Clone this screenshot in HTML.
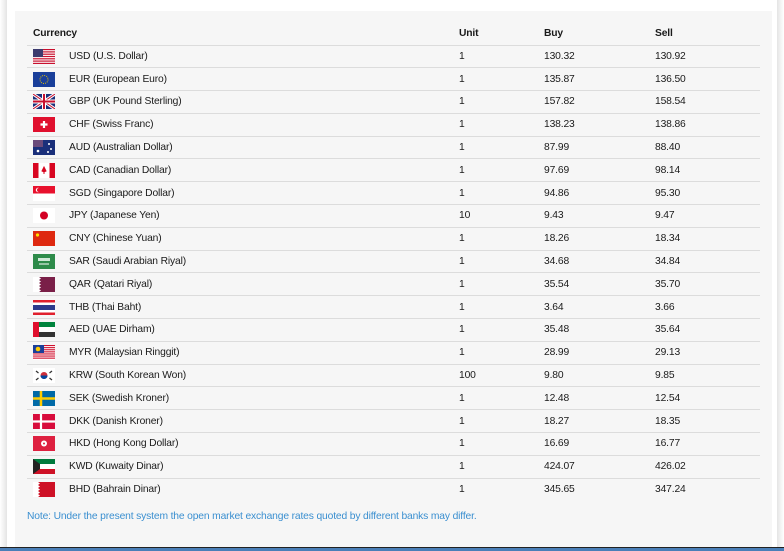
<!DOCTYPE html>
<html><head><style>
*{margin:0;padding:0;box-sizing:border-box}
body{width:784px;height:551px;background:#fff;position:relative;overflow:hidden;font-family:"Liberation Sans",sans-serif;color:#1a1a1a}
.ls{position:absolute;left:0;top:0;width:7px;height:551px;background:linear-gradient(90deg,#fff,#e4e4e4)}
.rs{position:absolute;left:777px;top:0;width:7px;height:551px;background:linear-gradient(90deg,#e4e4e4,#fff)}
.panel{position:absolute;left:15px;top:11px;width:757px;height:536px;background:#f6f6f6}
table{position:absolute;left:27px;top:23px;width:733px;border-collapse:collapse;font-size:10.3px;letter-spacing:-0.15px}
th{text-align:left;font-weight:bold;height:22px;border-bottom:1px solid #dcdcdc;padding:0}
td{height:22.8px;border-bottom:1px solid #dcdcdc;padding:0;vertical-align:middle}
tr:last-child td{border-bottom:none}
td svg{display:block;margin-left:6px}
.c1{width:42px}.c2{width:390px}.c3{width:85px}.c4{width:111px}
.note{position:absolute;left:27px;top:511px;font-size:10.3px;color:#3a8fd0;letter-spacing:-0.15px}
.tb{position:absolute;left:0;top:547px;width:784px;height:4px;background:#4a7fb8;border-top:1px solid #222}
</style></head><body>
<div class="ls"></div><div class="rs"></div>
<div class="panel"></div>
<table>
<tr><th colspan="2" style="padding-left:6px">Currency</th><th>Unit</th><th>Buy</th><th>Sell</th></tr>
<tr><td class="c1"><svg width="22" height="15"><rect width="22" height="15" fill="#fff"/><g fill="#c8102e"><rect y="0" width="22" height="1.2"/><rect y="2.3" width="22" height="1.2"/><rect y="4.6" width="22" height="1.2"/><rect y="6.9" width="22" height="1.2"/><rect y="9.2" width="22" height="1.2"/><rect y="11.5" width="22" height="1.2"/><rect y="13.8" width="22" height="1.2"/></g><rect width="10" height="8" fill="#3c3b6e"/></svg></td><td class="c2">USD (U.S. Dollar)</td><td class="c3">1</td><td class="c4">130.32</td><td>130.92</td></tr>
<tr><td><svg width="22" height="15"><rect width="22" height="15" fill="#1a3f9a"/><circle cx="11" cy="7.5" r="4" fill="none" stroke="#e6c200" stroke-dasharray="1 1.1"/></svg></td><td>EUR (European Euro)</td><td>1</td><td>135.87</td><td>136.50</td></tr>
<tr><td><svg width="22" height="15"><rect width="22" height="15" fill="#1a2f7a"/><path d="M0 0L22 15M22 0L0 15" stroke="#fff" stroke-width="3"/><path d="M0 0L22 15M22 0L0 15" stroke="#c8102e" stroke-width="1"/><path d="M11 0V15M0 7.5H22" stroke="#fff" stroke-width="4"/><path d="M11 0V15M0 7.5H22" stroke="#c8102e" stroke-width="2"/></svg></td><td>GBP (UK Pound Sterling)</td><td>1</td><td>157.82</td><td>158.54</td></tr>
<tr><td><svg width="22" height="15"><rect width="22" height="15" fill="#e0102e"/><path d="M11 4V11M7.5 7.5H14.5" stroke="#fff" stroke-width="2.2"/></svg></td><td>CHF (Swiss Franc)</td><td>1</td><td>138.23</td><td>138.86</td></tr>
<tr><td><svg width="22" height="15"><rect width="22" height="15" fill="#1a2f7a"/><rect width="10" height="7" fill="#6a4a7a"/><circle cx="5" cy="11" r="1.3" fill="#fff"/><circle cx="16" cy="4" r="1" fill="#fff"/><circle cx="18" cy="9" r="1" fill="#fff"/><circle cx="15" cy="12" r="1" fill="#fff"/></svg></td><td>AUD (Australian Dollar)</td><td>1</td><td>87.99</td><td>88.40</td></tr>
<tr><td><svg width="22" height="15"><rect width="22" height="15" fill="#fff"/><rect width="5.5" height="15" fill="#d80621"/><rect x="16.5" width="5.5" height="15" fill="#d80621"/><path d="M11 4L13 8L11 9L9 8Z M11 9V11" stroke="#d80621" fill="#d80621"/></svg></td><td>CAD (Canadian Dollar)</td><td>1</td><td>97.69</td><td>98.14</td></tr>
<tr><td><svg width="22" height="15"><rect width="22" height="15" fill="#fff"/><rect width="22" height="7.5" fill="#e8112d"/><circle cx="5" cy="4" r="2.2" fill="#fff"/><circle cx="6" cy="4" r="2" fill="#e8112d"/></svg></td><td>SGD (Singapore Dollar)</td><td>1</td><td>94.86</td><td>95.30</td></tr>
<tr><td><svg width="22" height="15"><rect width="22" height="15" fill="#fff"/><circle cx="11" cy="7.5" r="4" fill="#d30024"/></svg></td><td>JPY (Japanese Yen)</td><td>10</td><td>9.43</td><td>9.47</td></tr>
<tr><td><svg width="22" height="15"><rect width="22" height="15" fill="#de2910"/><circle cx="4.5" cy="4" r="1.6" fill="#ffde00"/></svg></td><td>CNY (Chinese Yuan)</td><td>1</td><td>18.26</td><td>18.34</td></tr>
<tr><td><svg width="22" height="15"><rect width="22" height="15" fill="#2e8b4a"/><rect x="5" y="4" width="12" height="3" fill="#cfe8d6"/><path d="M6 10H16" stroke="#fff"/></svg></td><td>SAR (Saudi Arabian Riyal)</td><td>1</td><td>34.68</td><td>34.84</td></tr>
<tr><td><svg width="22" height="15"><rect width="22" height="15" fill="#7a1f48"/><path d="M0 0H6L8 1.5L6 3L8 4.5L6 6L8 7.5L6 9L8 10.5L6 12L8 13.5L6 15H0Z" fill="#fff"/></svg></td><td>QAR (Qatari Riyal)</td><td>1</td><td>35.54</td><td>35.70</td></tr>
<tr><td><svg width="22" height="15"><rect width="22" height="15" fill="#e0202e"/><rect y="2.5" width="22" height="10" fill="#fff"/><rect y="5" width="22" height="5" fill="#2d3a8c"/></svg></td><td>THB (Thai Baht)</td><td>1</td><td>3.64</td><td>3.66</td></tr>
<tr><td><svg width="22" height="15"><rect width="22" height="5" fill="#00843d"/><rect y="5" width="22" height="5" fill="#fff"/><rect y="10" width="22" height="5" fill="#333"/><rect width="6" height="15" fill="#e0102e"/></svg></td><td>AED (UAE Dirham)</td><td>1</td><td>35.48</td><td>35.64</td></tr>
<tr><td><svg width="22" height="15"><rect width="22" height="15" fill="#fff"/><g fill="#d0102e"><rect y="0" width="22" height="1.1"/><rect y="2.1" width="22" height="1.1"/><rect y="4.2" width="22" height="1.1"/><rect y="6.3" width="22" height="1.1"/><rect y="8.4" width="22" height="1.1"/><rect y="10.5" width="22" height="1.1"/><rect y="12.6" width="22" height="1.1"/></g><rect width="11" height="8" fill="#1a3f9a"/><circle cx="5" cy="4" r="2.3" fill="#ffcc00"/></svg></td><td>MYR (Malaysian Ringgit)</td><td>1</td><td>28.99</td><td>29.13</td></tr>
<tr><td><svg width="22" height="15"><rect width="22" height="15" fill="#fff"/><circle cx="11" cy="7.5" r="3.5" fill="#cd2e3a"/><path d="M7.5 7.5A3.5 3.5 0 0 0 14.5 7.5Z" fill="#0047a0"/><g stroke="#333" stroke-width="1.3"><path d="M3 3L5.5 5M16.5 10L19 12M19 3L16.5 5M3 12L5.5 10"/></g></svg></td><td>KRW (South Korean Won)</td><td>100</td><td>9.80</td><td>9.85</td></tr>
<tr><td><svg width="22" height="15"><rect width="22" height="15" fill="#006aa7"/><path d="M8 0V15M0 7.5H22" stroke="#fecc00" stroke-width="2.5"/></svg></td><td>SEK (Swedish Kroner)</td><td>1</td><td>12.48</td><td>12.54</td></tr>
<tr><td><svg width="22" height="15"><rect width="22" height="15" fill="#d80c3c"/><path d="M8 0V15M0 7.5H22" stroke="#fff" stroke-width="2.2"/></svg></td><td>DKK (Danish Kroner)</td><td>1</td><td>18.27</td><td>18.35</td></tr>
<tr><td><svg width="22" height="15"><rect width="22" height="15" fill="#de2040"/><circle cx="11" cy="7.5" r="3" fill="#fff"/><circle cx="11" cy="7.5" r="1" fill="#de2040"/></svg></td><td>HKD (Hong Kong Dollar)</td><td>1</td><td>16.69</td><td>16.77</td></tr>
<tr><td><svg width="22" height="15"><rect width="22" height="5" fill="#007a3d"/><rect y="5" width="22" height="5" fill="#fff"/><rect y="10" width="22" height="5" fill="#ce1126"/><path d="M0 0L7 5V10L0 15Z" fill="#222"/></svg></td><td>KWD (Kuwaity Dinar)</td><td>1</td><td>424.07</td><td>426.02</td></tr>
<tr><td><svg width="22" height="15"><rect width="22" height="15" fill="#ce1126"/><path d="M0 0H5L7 1.5L5 3L7 4.5L5 6L7 7.5L5 9L7 10.5L5 12L7 13.5L5 15H0Z" fill="#fff"/></svg></td><td>BHD (Bahrain Dinar)</td><td>1</td><td>345.65</td><td>347.24</td></tr>
</table>
<div class="note">Note: Under the present system the open market exchange rates quoted by different banks may differ.</div>
<div class="tb"></div>
</body></html>
